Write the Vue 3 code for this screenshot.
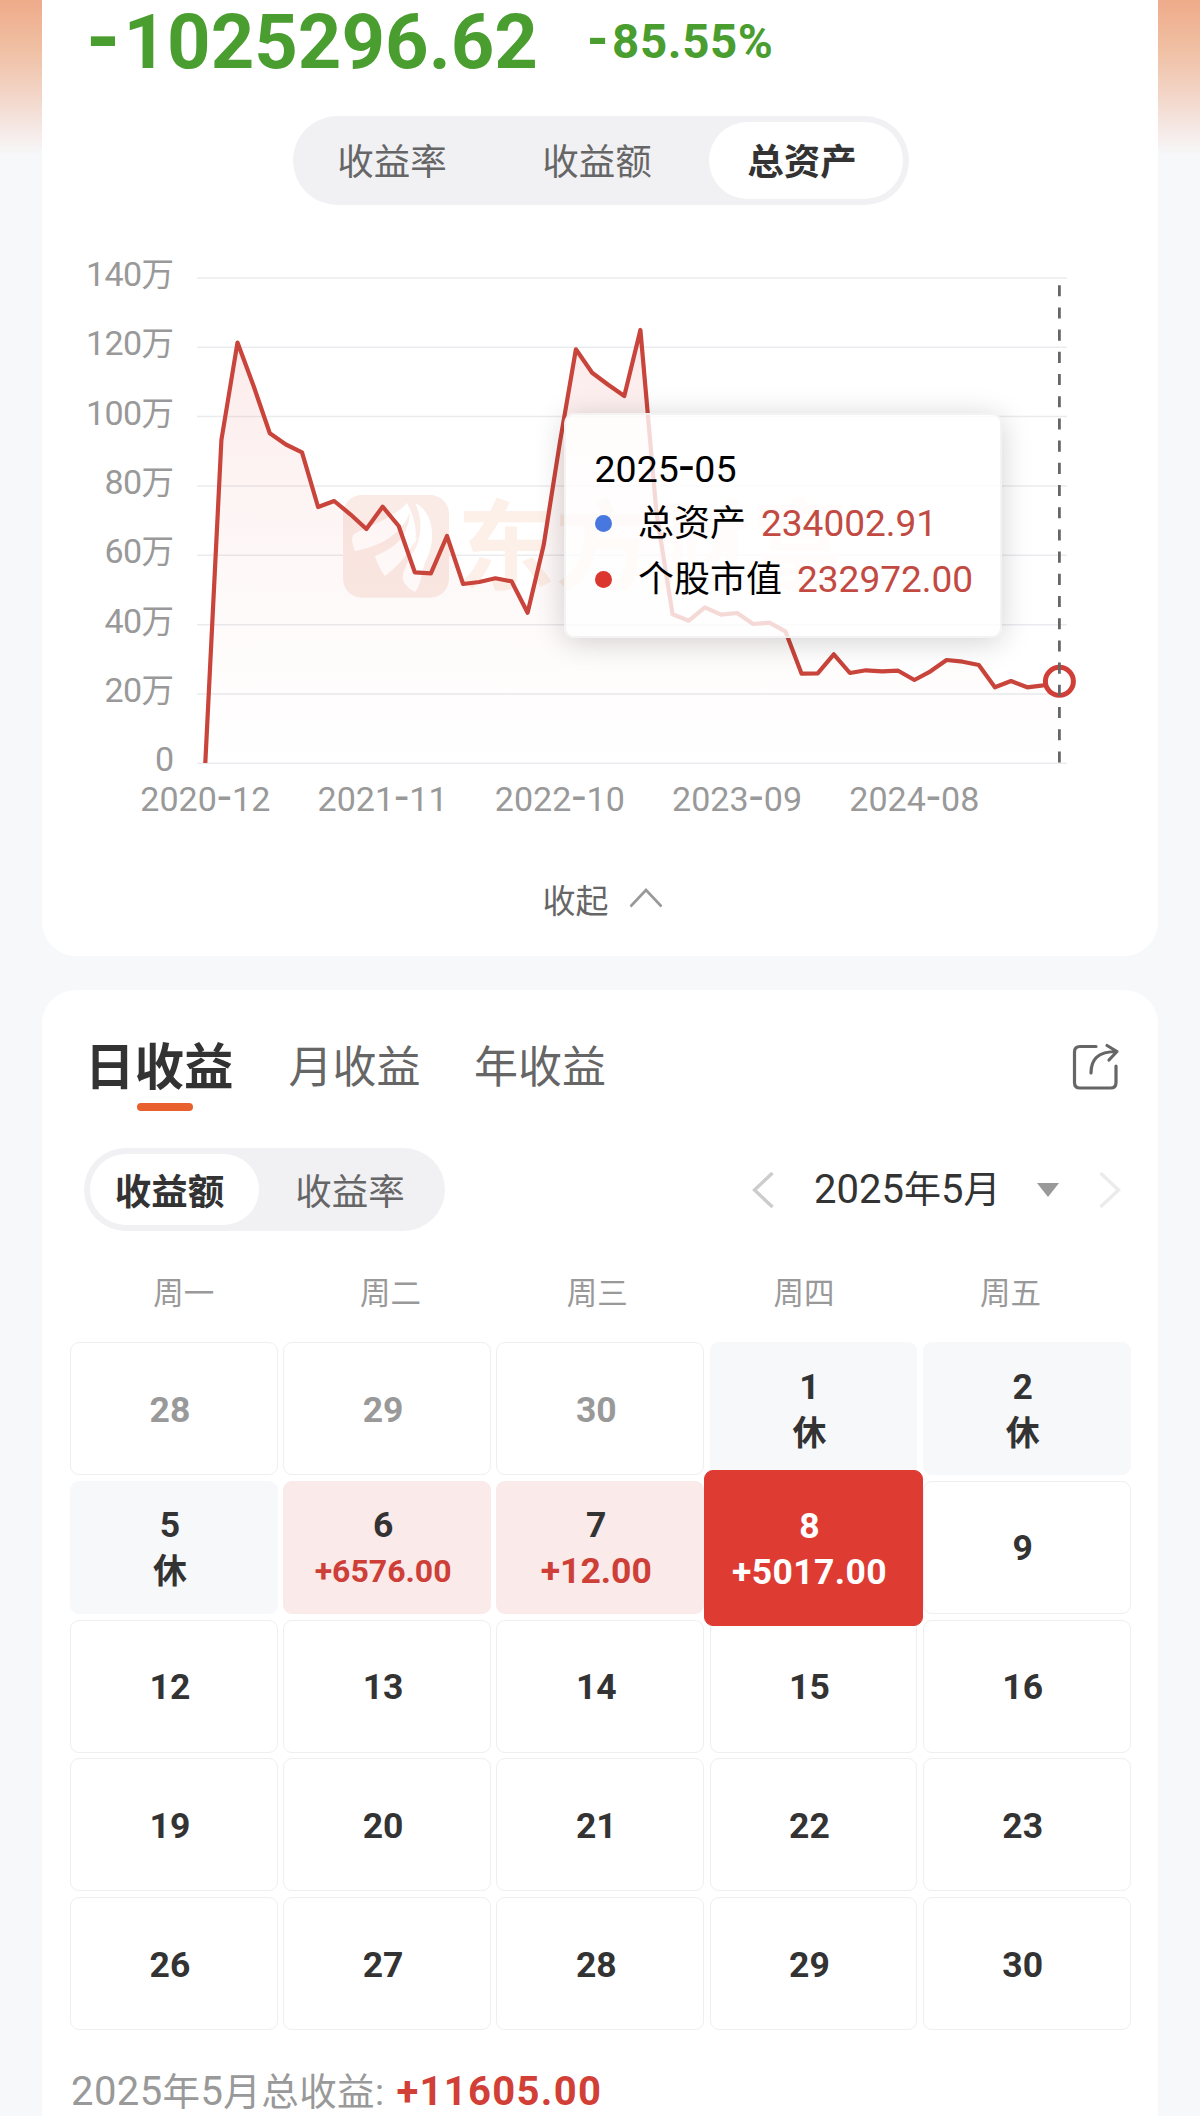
<script setup>
const ranges = ['收益率', '收益额', '总资产']

const x0 = 205.3
const step = 16.115
const levels = [
  763, 440, 342.5, 386, 433.3, 444.5, 452.3, 507, 501, 514.3, 529, 506.7, 526, 572.3, 573.3, 536, 584, 582,
  578.3, 581.3, 612.7, 545, 443, 349.3, 372.7, 384.7, 396, 330, 513, 614.3, 620.7, 607.3, 614.7, 613, 624,
  622.7, 631.3, 673.7, 673.3, 654.3, 673, 670.3, 671.3, 670.7, 680, 671.3, 660, 661.7, 665, 687.3, 681, 687.3,
  685.3, 681.3,
]
const points = levels.map((y, i) => `${(x0 + step * i).toFixed(1)},${y}`)
const line = 'M' + points.join('L')
const area = line + `L${(x0 + step * 53).toFixed(1)},763.4L${x0},763.4Z`

const yTicks = [140, 120, 100, 80, 60, 40, 20, 0].map((v, i) => ({ v, y: 277.9 + 69.35 * i }))
const xTicks = ['2020-12', '2021-11', '2022-10', '2023-09', '2024-08'].map((t, i) => ({ t, x: 205.3 + 177.25 * i }))

const weekdays = ['周一', '周二', '周三', '周四', '周五']
const days = [
  { d: 28, kind: 'dim' }, { d: 29, kind: 'dim' }, { d: 30, kind: 'dim' },
  { d: 1, kind: 'rest', note: '休' }, { d: 2, kind: 'rest', note: '休' },
  { d: 5, kind: 'rest', note: '休' }, { d: 6, kind: 'gain small', note: '+6576.00' }, { d: 7, kind: 'gain', note: '+12.00' },
  { d: 8, kind: 'today', note: '+5017.00' }, { d: 9 },
  { d: 12 }, { d: 13 }, { d: 14 }, { d: 15 }, { d: 16 },
  { d: 19 }, { d: 20 }, { d: 21 }, { d: 22 }, { d: 23 },
  { d: 26 }, { d: 27 }, { d: 28 }, { d: 29 }, { d: 30 },
]
</script>

<template>
  <div class="page">
    <section class="card summary">
      <div class="amounts">
        <span class="total"><i class="dash">-</i>1025296.62</span>
        <span class="percent"><i class="dash">-</i>85.55%</span>
      </div>

      <div class="segment wide">
        <span v-for="(r, i) in ranges" :key="r" :class="{ on: i === 2 }">{{ r }}</span>
      </div>

      <div class="chart">
        <svg width="1116" height="620" viewBox="42 205 1116 620">
          <defs>
            <linearGradient id="fade" gradientUnits="userSpaceOnUse" x1="0" y1="330" x2="0" y2="763">
              <stop offset="0" stop-color="#de3b33" stop-opacity=".1" />
              <stop offset=".6" stop-color="#de3b33" stop-opacity=".03" />
              <stop offset="1" stop-color="#de3b33" stop-opacity="0" />
            </linearGradient>
          </defs>
          <g class="grid">
            <line v-for="t in yTicks" :key="t.v" x1="197" x2="1067" :y1="t.y" :y2="t.y" />
          </g>
          <g class="mark">
            <rect x="343" y="495" width="106" height="102.7" rx="19" />
            <path class="cut" d="M407 503C392 520 362 528 353 535C351 540 353 547 355 551C378 547 402 535 410 512C408 540 392 549 375 556C377 563 381 571 385 576C398 566 411 552 417 536C414 557 398 573 404 582C407 587 411 590 415 592C422 584 421 570 427 558C436 540 434 512 415 503C425 522 420 546 409 558C421 538 415 518 407 503Z" />
            <text x="457" y="582" textLength="392">东方财富</text>
          </g>
          <path :d="area" fill="url(#fade)" />
          <path :d="line" class="trend" />
          <circle cx="1059.4" cy="681.3" r="14" class="ring" />
          <line x1="1059.4" x2="1059.4" y1="285.2" y2="763" class="cursor" />
          <g class="ylabels">
            <text v-for="t in yTicks" :key="t.v" x="173.500" :y="t.y + 8"><tspan>{{ t.v }}</tspan><tspan v-if="t.v" class="wan">万</tspan></text>
          </g>
          <g class="xlabels">
            <text v-for="t in xTicks" :key="t.t" :x="t.x" y="811">{{ t.t.slice(0, 4) }}<tspan dx="1" dy="1.500" class="sep">-</tspan><tspan dx="1" dy="-1.500">{{ t.t.slice(5) }}</tspan></text>
          </g>
        </svg>
        <div class="tooltip">
          <p class="month">2025<i class="thin">-</i>05</p>
          <p><b class="dot blue"></b><span>总资产</span><em>234002.91</em></p>
          <p><b class="dot red"></b><span>个股市值</span><em>232972.00</em></p>
        </div>
      </div>

      <div class="collapse">
        <span>收起</span>
        <svg width="34" height="20" viewBox="0 0 34 20"><path d="M1.500 18.500L17 2L32.500 18.500" fill="none" stroke="#999" stroke-width="2.6" /></svg>
      </div>
    </section>

    <section class="card calendar">
      <div class="tabs">
        <span class="tab active">日收益</span>
        <span class="tab second">月收益</span>
        <span class="tab third">年收益</span>
        <svg class="share" width="48" height="48" viewBox="0 0 48 48" fill="none" stroke="#666" stroke-width="3.2" stroke-linecap="round" stroke-linejoin="round">
          <path d="M24 3.500H8Q2.500 3.500 2.500 9V39.500Q2.500 45 8 45H38.500Q44 45 44 39.500V23" />
          <path d="M19 30C19 17 25 8.500 45 8.500M35 2.500L45 8.500L37 17" />
        </svg>
      </div>

      <div class="controls">
        <div class="segment narrow">
          <span class="on">收益额</span>
          <span class="off">收益率</span>
        </div>
        <div class="picker">
          <svg width="22" height="36" viewBox="0 0 22 36"><path d="M20.500 1L2.500 18L20.500 35" fill="none" stroke="#ccc" stroke-width="3.4" /></svg>
          <span class="date"><u>2025</u>年<u>5</u>月</span>
          <svg class="caret" width="22" height="14" viewBox="0 0 22 14"><path d="M0 0H22L11 14Z" fill="#999" /></svg>
          <svg width="22" height="36" viewBox="0 0 22 36"><path d="M1.500 1L19.500 18L1.500 35" fill="none" stroke="#ebebeb" stroke-width="3.4" /></svg>
        </div>
      </div>

      <div class="week">
        <span v-for="w in weekdays" :key="w">{{ w }}</span>
      </div>

      <div class="days">
        <div v-for="(c, i) in days" :key="i" class="day" :class="c.kind">
          <span class="num">{{ c.d }}</span>
          <span v-if="c.note" class="note">{{ c.note }}</span>
        </div>
      </div>

      <p class="sum"><span><u>2025</u>年<u>5</u>月总收益:</span><strong>+11605.00</strong></p>
    </section>
  </div>
</template>

<style>
body {
  margin: 0;
}
</style>

<style scoped>
.page {
  height: 2116px;
  overflow: hidden;
  box-sizing: border-box;
  padding: 0 42px;
  display: flex;
  flex-direction: column;
  gap: 34px;
  background: linear-gradient(#efab8a 0, #f0c0a4 50px, #f3d5c8 95px, #f5e9e6 130px, #f7f8fa 155px);
  font-family: Roboto, "Noto Sans CJK SC", sans-serif;
  color: #333;
}
p {
  margin: 0;
}
i, em {
  font-style: normal;
}
u {
  text-decoration: none;
}
.card {
  background: #fff;
  flex: none;
}
.summary {
  height: 956px;
  border-radius: 0 0 34px 34px;
}
.amounts {
  height: 84px;
  padding-left: 44px;
  display: flex;
  align-items: center;
  gap: 49px;
  color: #4a9d2f;
  font-weight: 700;
  white-space: nowrap;
}
.total {
  font-size: 76px;
  line-height: 84px;
}
.percent {
  font-size: 47.5px;
  line-height: 60px;
  letter-spacing: .6px;
}
.dash {
  font-size: 1.15em;
  line-height: 0;
  margin-right: 3px;
}
.thin {
  font-size: 1.4em;
  line-height: 0;
  vertical-align: -.03em;
  margin: 0 .5px;
}
.segment {
  display: flex;
  box-sizing: border-box;
  border-radius: 45px;
  background: #f1f1f4;
  font-size: 36.5px;
  color: #666;
}
.segment span {
  flex: 1;
  display: flex;
  align-items: center;
  justify-content: center;
  border-radius: 40px;
}
.segment .on {
  background: #fff;
  color: #333;
  font-weight: 700;
}
.wide {
  width: 616px;
  height: 89px;
  margin: 32px 0 0 251px;
  padding: 6px;
}
.wide span {
  padding: 0 19px 2px 0;
}
.wide .on {
  flex: 0 0 186px;
  padding-right: 8px;
}
.chart {
  position: relative;
  height: 620px;
}
.chart svg {
  display: block;
}
.grid line {
  stroke: #e9ebee;
  stroke-width: 1.5;
}
.mark rect {
  fill: #faebe6;
}
.mark .cut {
  fill: #fff;
}
.mark text {
  font: 700 98px "Noto Sans CJK SC", sans-serif;
  fill: #fcf0e8;
}
.trend {
  fill: none;
  stroke: #c9443b;
  stroke-width: 4.2;
  stroke-linejoin: round;
}
.ring {
  fill: #fff;
  stroke: #cf3f37;
  stroke-width: 5;
}
.cursor {
  stroke: #666;
  stroke-width: 2.8;
  stroke-dasharray: 11.1 11.1;
}
.ylabels, .xlabels {
  font-size: 34px;
  fill: #999;
}
.ylabels {
  text-anchor: end;
  letter-spacing: -.6px;
}
.wan {
  font-size: 32.5px;
}
.xlabels {
  text-anchor: middle;
}
.sep {
  font-size: 48px;
}
.tooltip {
  position: absolute;
  left: 522px;
  top: 208px;
  width: 438px;
  height: 225px;
  box-sizing: border-box;
  padding: 30px 0 0 28.5px;
  border: 2px solid rgba(240, 240, 240, .8);
  border-radius: 10px;
  background: rgba(255, 255, 255, .8);
  box-shadow: 0 4px 30px rgba(0, 0, 0, .18);
  color: #000;
  font-size: 36px;
}
.tooltip p {
  display: flex;
  align-items: center;
  height: 56px;
  line-height: 56px;
  white-space: nowrap;
}
.tooltip .month {
  display: block;
  height: 50.5px;
  line-height: 48px;
  font-size: 37.5px;
}
.dot {
  width: 17px;
  height: 17px;
  border-radius: 50%;
  margin-right: 26.5px;
}
.blue {
  background: #4878df;
}
.red {
  background: #dc372f;
}
.tooltip em {
  margin-left: 15px;
  font-size: 37px;
  color: #c24a42;
}
.collapse {
  height: 150px;
  display: flex;
  justify-content: center;
  padding-left: 5px;
  gap: 20px;
  color: #666;
  font-size: 33px;
  line-height: 153px;
}
.collapse svg {
  margin-top: 63px;
}
.calendar {
  height: 1200px;
  border-radius: 34px 34px 0 0;
}
.tabs {
  height: 158px;
  display: flex;
  padding: 0 38px 0 43px;
  line-height: 157px;
  font-size: 44px;
  color: #666;
}
.active {
  display: flex;
  flex-direction: column;
  align-items: center;
  font-size: 49.5px;
  font-weight: 700;
  color: #333;
}
.active::after {
  content: "";
  width: 56px;
  height: 8px;
  margin: -44px 0 0 11px;
  border-radius: 4px;
  background: #e7602e;
}
.second {
  margin-left: 55px;
}
.third {
  margin-left: 53.5px;
}
.share {
  margin: 53px 0 0 auto;
}
.controls {
  height: 83px;
  display: flex;
  justify-content: space-between;
  padding: 0 37px 0 42px;
}
.narrow {
  width: 361px;
  padding: 6px;
}
.narrow span {
  padding-bottom: 1px;
}
.narrow .on {
  flex: 0 0 169px;
  box-sizing: border-box;
  padding-right: 10px;
}
.narrow .off {
  padding-left: 2px;
}
.picker {
  display: flex;
  align-items: center;
}
.date {
  width: 182px;
  margin-left: 40px;
  font-size: 37px;
  line-height: 85px;
  white-space: nowrap;
}
.date u {
  font-size: 40px;
}
.caret {
  margin: 0 40px 0 41px;
}
.week {
  display: grid;
  grid-template-columns: repeat(5, 206.7px);
  padding-left: 38.500px;
  height: 111px;
  line-height: 125px;
  text-align: center;
  font-size: 30.5px;
  color: #999;
}
.days {
  display: grid;
  grid-template-columns: repeat(5, 207.8px);
  grid-auto-rows: 133px;
  gap: 5.8px 5.4px;
  padding-left: 28px;
}
.day {
  box-sizing: border-box;
  border: 1.5px solid #efefef;
  border-radius: 9px;
  padding: 2px 8px 0 0;
  display: flex;
  flex-direction: column;
  align-items: center;
  justify-content: center;
  font-size: 35.5px;
  line-height: 46px;
  font-weight: 700;
}
.dim {
  color: #999;
}
.rest {
  border-color: #f7f8fa;
  background: #f7f8fa;
}
.rest .note {
  font-size: 34px;
}
.gain {
  border-color: #faeaea;
  background: #faeaea;
}
.gain .note {
  color: #cd3f37;
}
.small .note {
  font-size: 32px;
}
.today {
  z-index: 1;
  margin: -11px -5.5px -12px;
  border-color: #de3b33;
  background: #de3b33;
  color: #fff;
}
.today .note {
  letter-spacing: .4px;
}
.sum {
  display: flex;
  padding-left: 29px;
  line-height: 124px;
  font-size: 37.5px;
  letter-spacing: .4px;
  color: #999;
  white-space: nowrap;
}
.sum u, .sum strong {
  font-size: 40px;
}
.sum strong {
  margin-left: 12px;
  letter-spacing: 1.3px;
  color: #d13f37;
}
</style>
